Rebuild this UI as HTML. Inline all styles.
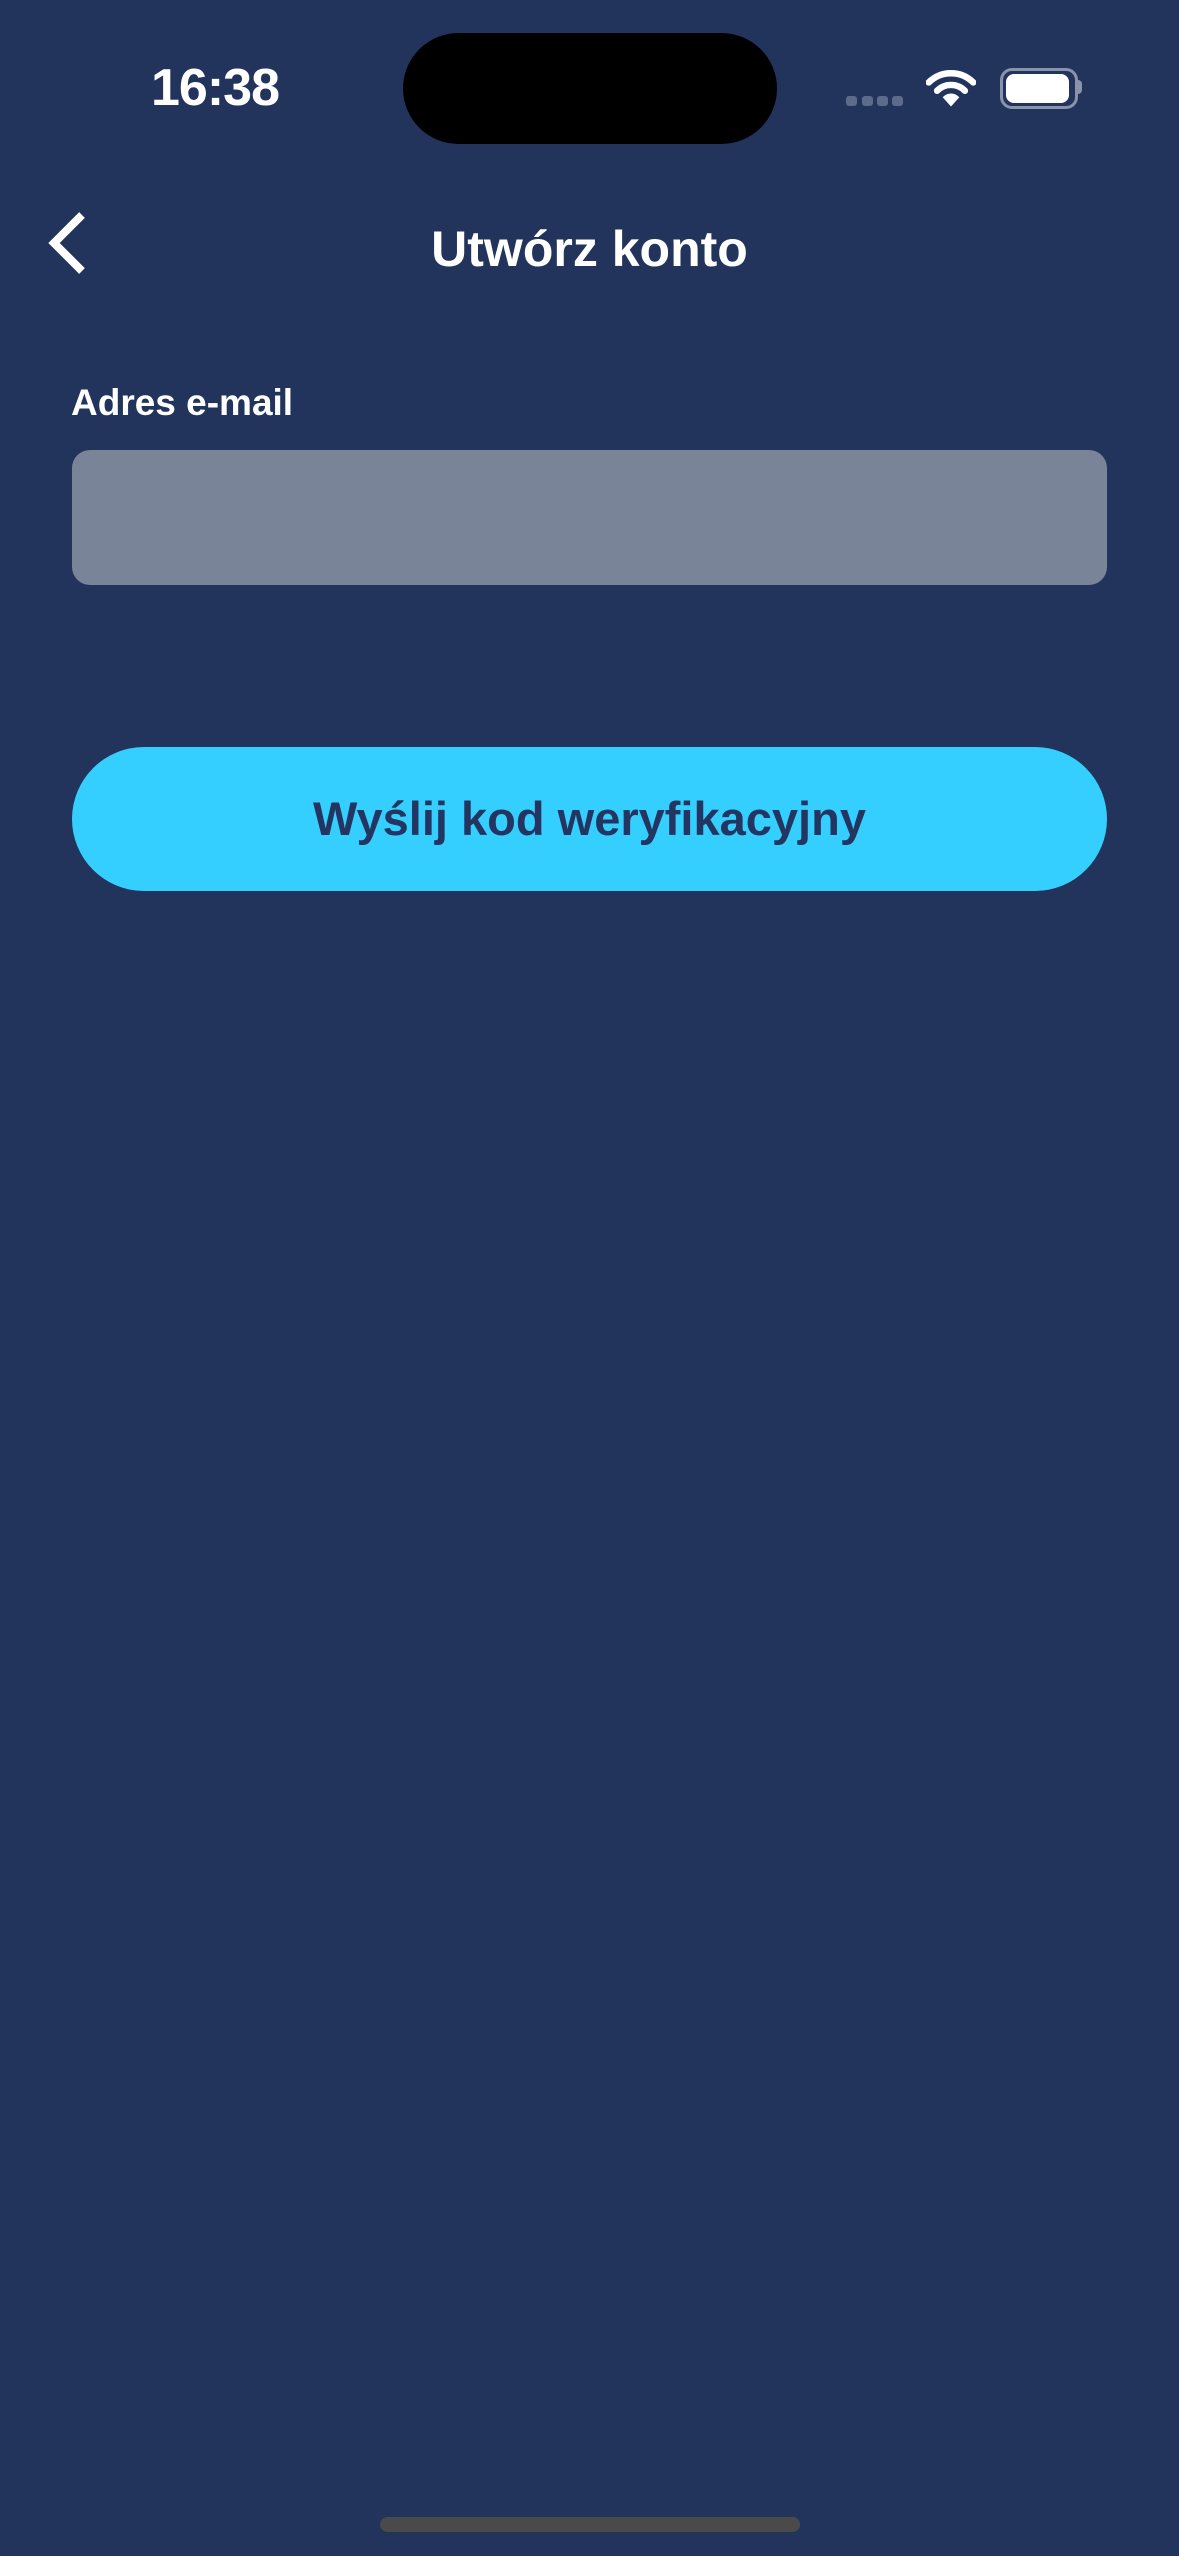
<!DOCTYPE html>
<html><head><meta charset="utf-8"><style>
html,body{margin:0;padding:0}
body{width:1179px;height:2556px;background:#22345c;position:relative;overflow:hidden;font-family:"Liberation Sans",sans-serif}
.abs{position:absolute}
</style></head><body>
<div class="abs" style="left:140px;top:58px;width:150px;text-align:center;color:#fff;font-size:52px;font-weight:bold;letter-spacing:-1px">16:38</div>
<div class="abs" style="left:403px;top:33px;width:374px;height:111px;background:#000;border-radius:56px"></div>
<div class="abs" style="left:846px;top:96px;width:11px;height:10px;background:#5d6b8a;border-radius:3px"></div>
<div class="abs" style="left:862px;top:96px;width:11px;height:10px;background:#5d6b8a;border-radius:3px"></div>
<div class="abs" style="left:877px;top:96px;width:11px;height:10px;background:#5d6b8a;border-radius:3px"></div>
<div class="abs" style="left:892px;top:96px;width:11px;height:10px;background:#5d6b8a;border-radius:3px"></div>
<svg class="abs" style="left:926px;top:68px" width="50" height="40" viewBox="0 0 54 42">
<path d="M3 15 A34 34 0 0 1 51 15" stroke="#fff" stroke-width="7" fill="none" stroke-linecap="round"/>
<path d="M12 24 A21 21 0 0 1 42 24" stroke="#fff" stroke-width="7" fill="none" stroke-linecap="round"/>
<path d="M27 41 L18 31 A12 12 0 0 1 36 31 Z" fill="#fff"/>
</svg>
<div class="abs" style="left:1000px;top:68px;width:72px;height:35px;border:3px solid #8a93ac;border-radius:12px;box-sizing:content-box"></div>
<div class="abs" style="left:1006px;top:74px;width:63px;height:29px;background:#fff;border-radius:8px"></div>
<div class="abs" style="left:1077px;top:80px;width:5px;height:14px;background:#8a93ac;border-radius:0 4px 4px 0"></div>
<svg class="abs" style="left:44px;top:210px" width="46" height="66" viewBox="0 0 46 66">
<path d="M38 5 L10 33 L38 61" stroke="#fff" stroke-width="8" fill="none"/>
</svg>
<div class="abs" style="left:0;top:220px;width:1179px;text-align:center;color:#fff;font-size:50px;font-weight:bold">Utwórz konto</div>
<div class="abs" style="left:71px;top:382px;color:#fff;font-size:37px;font-weight:bold">Adres e-mail</div>
<div class="abs" style="left:72px;top:450px;width:1035px;height:135px;background:#7a8499;border-radius:18px"></div>
<div class="abs" style="left:72px;top:747px;width:1035px;height:144px;background:#35cfff;border-radius:72px;text-align:center;line-height:144px;color:#233560;font-size:47px;font-weight:bold">Wyślij kod weryfikacyjny</div>
<div class="abs" style="left:380px;top:2517px;width:420px;height:15px;background:#4a4a4a;border-radius:8px"></div>
</body></html>
